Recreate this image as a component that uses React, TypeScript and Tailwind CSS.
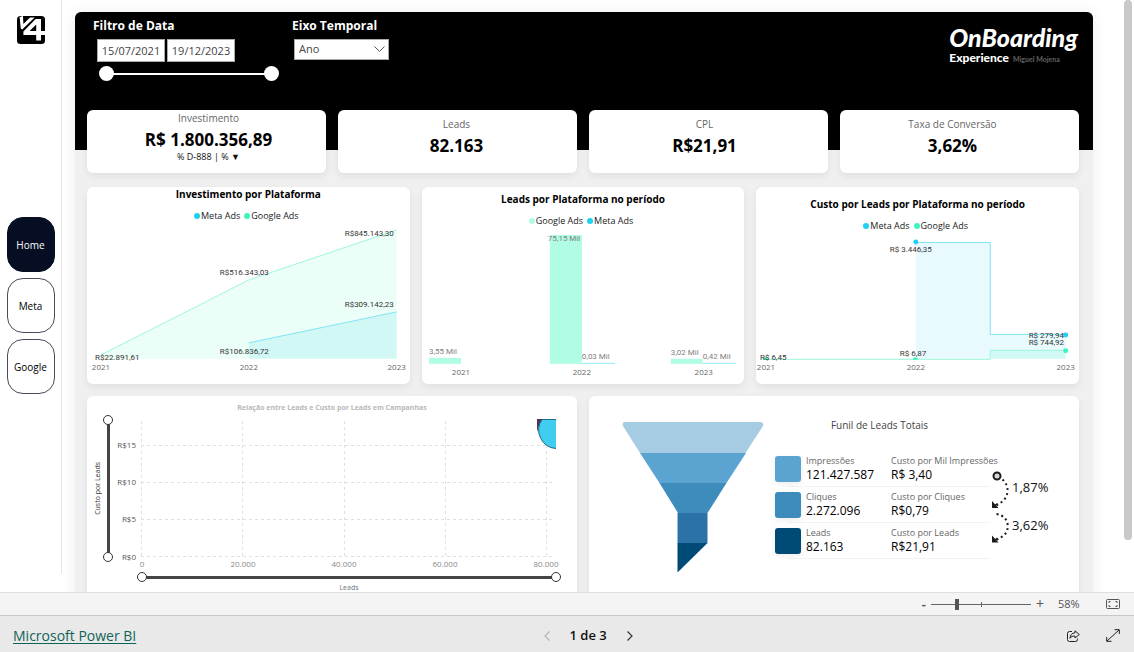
import { useState } from "react";
import clsx from "clsx";

const META = "#1fd1f0";
const GOOGLE = "#3df5bd";

const Logo = () => (
  <svg width="28" height="28" viewBox="0 0 28 28" aria-label="V4">
    <rect width="28" height="28" rx="3.5" fill="#000" />
    <path d="M2.6 1 6 0l.4 8L13 1.6h4.6L5.2 13.4 3.8 12.6Z" fill="#fff" />
    <path
      d="M18.6 3H24v12h4v4h-4v5.6h-4.8V19H6.4v-3.6ZM19.2 8.6 12.6 15h6.6Z"
      fill="#fff"
      fillRule="evenodd"
    />
  </svg>
);

const pages = ["Home", "Meta", "Google"];

const Sidebar = () => {
  const [active, setActive] = useState("Home");

  return (
    <aside className="mb-[18px] flex w-[62px] shrink-0 flex-col items-center border-r border-[#e6e6e6] pt-4">
      <Logo />
      <nav className="mt-[173px] flex flex-col gap-[6px]">
        {pages.map((page) => (
          <button
            key={page}
            onClick={() => setActive(page)}
            className={clsx(
              "h-[55px] w-12 rounded-2xl border pt-[2px] text-[10px]",
              page === active
                ? "border-[#060e24] bg-[#060e24] text-white"
                : "border-[#4a4a58] bg-white text-black",
            )}
          >
            {page}
          </button>
        ))}
      </nav>
    </aside>
  );
};

type RangeProps = { label: string; tone?: "light" | "dark"; vertical?: boolean };

// two native sliders on one track, only the thumbs take the pointer
const DualRange = ({ label, tone = "dark", vertical = false }: RangeProps) => {
  const [from, setFrom] = useState(0);
  const [to, setTo] = useState(100);
  const input = clsx(
    "pointer-events-none absolute inset-0 m-0 h-full w-full appearance-none bg-transparent",
    "[&::-webkit-slider-thumb]:pointer-events-auto [&::-webkit-slider-thumb]:appearance-none [&::-webkit-slider-thumb]:rounded-full [&::-webkit-slider-thumb]:bg-white",
    tone === "light"
      ? "[&::-webkit-slider-thumb]:h-[15px] [&::-webkit-slider-thumb]:w-[15px]"
      : "[&::-webkit-slider-thumb]:h-[10px] [&::-webkit-slider-thumb]:w-[10px] [&::-webkit-slider-thumb]:border [&::-webkit-slider-thumb]:border-solid [&::-webkit-slider-thumb]:border-[#333]",
    vertical && "[direction:rtl] [writing-mode:vertical-lr]",
  );

  return (
    <div
      className={clsx(
        "relative flex items-center justify-center",
        tone === "light" ? "h-[15px]" : vertical ? "h-[147px] w-[10px]" : "h-[10px]",
      )}
    >
      <div
        className={clsx(
          tone === "light" && "mx-2 h-[2px] w-full bg-white",
          tone === "dark" && !vertical && "mx-1 h-[3px] w-full bg-[#444]",
          tone === "dark" && vertical && "h-[138px] w-[3px] bg-[#444]",
        )}
      />
      <input
        type="range"
        aria-label={`${label} mínimo`}
        className={input}
        value={from}
        onChange={(e) => setFrom(Math.min(+e.target.value, to))}
      />
      <input
        type="range"
        aria-label={`${label} máximo`}
        className={input}
        value={to}
        onChange={(e) => setTo(Math.max(+e.target.value, from))}
      />
    </div>
  );
};

const dateInput =
  "h-[23px] w-[68px] border border-[#aaa] bg-white text-center text-[11px] text-[#444]";

const Header = () => (
  <header className="flex h-[138px] rounded-t-md bg-black pt-[6px] pr-[15px] pl-[18px] text-white">
    <fieldset className="w-[199px]">
      <legend className="text-xs leading-4 font-bold">Filtro de Data</legend>
      <div className="mt-[5px] ml-1 flex gap-[2px]">
        <input aria-label="Data inicial" defaultValue="15/07/2021" className={dateInput} />
        <input aria-label="Data final" defaultValue="19/12/2023" className={dateInput} />
      </div>
      <div className="mt-1 ml-[6px] w-[180px]">
        <DualRange label="Data" tone="light" />
      </div>
    </fieldset>

    <div>
      <label htmlFor="eixo" className="block text-xs leading-4 font-bold">
        Eixo Temporal
      </label>
      <div className="relative mt-[5px] ml-[2px]">
        <select
          id="eixo"
          className="block h-[21px] w-[95px] appearance-none border border-[#aaa] bg-white pl-1 text-[11px] text-[#444]"
        >
          <option>Ano</option>
          <option>Trimestre</option>
          <option>Mês</option>
        </select>
        <svg
          className="pointer-events-none absolute top-[7px] right-1"
          width="11"
          height="7"
          viewBox="0 0 11 7"
          fill="none"
          stroke="#555"
        >
          <path d="m.5.5 5 5 5-5" />
        </svg>
      </div>
    </div>

    <div className="ml-auto pt-1 font-['Lato',sans-serif] font-black">
      <div className="text-[25px] leading-[30px] italic">OnBoarding</div>
      <div className="flex items-baseline gap-1 text-xs leading-3">
        Experience
        <span className="text-[7px] text-[#5c5c5c]">Miguel Mojena</span>
      </div>
    </div>
  </header>
);

type Kpi = { label: string; value: string; note?: string; className?: string };

const kpis: Kpi[] = [
  { label: "Investimento", value: "R$ 1.800.356,89", note: "% D-888 | % ▼", className: "pl-1" },
  { label: "Leads", value: "82.163", className: "pt-[6px] pr-[2px]" },
  { label: "CPL", value: "R$21,91", className: "pt-[6px] pr-2" },
  { label: "Taxa de Conversão", value: "3,62%", className: "pt-[6px] pr-[14px]" },
];

const card = "rounded-md bg-white shadow-[0_3px_8px_rgba(0,0,0,0.07)]";

const KpiCard = ({ label, value, note, className }: Kpi) => (
  <div className={clsx(card, "h-[63px] text-center", className)}>
    <div className="text-[10px] leading-4 text-[#666]">{label}</div>
    <div className="mt-[3px] text-[17px] leading-[22px] font-bold text-black">{value}</div>
    {note && <div className="text-[9px] leading-3 text-[#111]">{note}</div>}
  </div>
);

type ChartCardProps = {
  title: string;
  legend: { name: string; color: string }[];
  className?: string;
  children: React.ReactNode;
};

const ChartCard = ({ title, legend, className, children }: ChartCardProps) => (
  <section className={clsx(card, "h-[197px]", className)}>
    <h2 className="text-center text-[10px] leading-[14px] font-bold text-black">{title}</h2>
    <ul className="mt-2 flex justify-center gap-1 pr-1 text-[9px] leading-[14px] text-[#222]">
      {legend.map(({ name, color }) => (
        <li key={name} className="flex items-center gap-px">
          <svg width="6" height="6">
            <circle cx="3" cy="3" r="3" fill={color} />
          </svg>
          {name}
        </li>
      ))}
    </ul>
    {children}
  </section>
);

type Label = [x: number, y: number, text: string];

const Labels = ({ items, className }: { items: Label[]; className: string }) => (
  <g className={clsx("text-[8px]", className)}>
    {items.map(([x, y, text]) => (
      <text key={text} x={x} y={y}>
        {text}
      </text>
    ))}
  </g>
);

const dataLabel = "fill-[#333] font-['Roboto',sans-serif]";
const axisLabel = "fill-[#666] [text-anchor:middle]";

const InvestmentChart = () => (
  <svg viewBox="0 36 323 161" className="block w-full">
    <path d="M14 172V168L162 93 310 43V172Z" fill={GOOGLE} fillOpacity="0.1" />
    <path d="M162 172V156L310 125V172Z" fill={META} fillOpacity="0.12" />
    <path d="M14 168 162 93 310 43" fill="none" stroke="#9cf7da" />
    <path d="M162 156 310 125" fill="none" stroke="#7fe5f5" />
    <Labels
      className={dataLabel}
      items={[
        [258, 49, "R$845.143,30"],
        [133, 88, "R$516.343,03"],
        [258, 120, "R$309.142,23"],
        [133, 167, "R$106.836,72"],
        [8, 173, "R$22.891,61"],
      ]}
    />
    <Labels
      className={axisLabel}
      items={[
        [14, 183, "2021"],
        [162, 183, "2022"],
        [310, 183, "2023"],
      ]}
    />
  </svg>
);

const LeadsChart = () => (
  <svg viewBox="0 41 323 156" className="block w-full">
    <g fill="#b1fce5">
      <rect x="7" y="171" width="32" height="6" />
      <rect x="128" y="48" width="32" height="129" />
      <rect x="249" y="172" width="32" height="5" />
    </g>
    <g fill="#8fe9f7">
      <rect x="160" y="176" width="33" height="1" />
      <rect x="281" y="176" width="33" height="1" />
    </g>
    <Labels
      className="fill-[#808080] font-['Roboto',sans-serif]"
      items={[
        [7, 167, "3,55 Mil"],
        [126, 54, "75,15 Mil"],
        [160, 172, "0,03 Mil"],
        [249, 168, "3,02 Mil"],
        [281, 172, "0,42 Mil"],
      ]}
    />
    <Labels
      className={axisLabel}
      items={[
        [39, 188, "2021"],
        [160, 188, "2022"],
        [282, 188, "2023"],
      ]}
    />
  </svg>
);

const CostChart = () => (
  <svg viewBox="0 46 323 151" className="block w-full">
    <path d="M160 172V55H235V147H310V172Z" fill={META} fillOpacity="0.1" />
    <path d="M235 172V163H310V172Z" fill={GOOGLE} fillOpacity="0.12" />
    <path d="M160 55.5H234.5V147.5H310" fill="none" stroke="#7fe5f5" />
    <path d="M9 172.5H234.5V163.5H310" fill="none" stroke="#9cf7da" />
    <g fill={META}>
      <circle cx="160" cy="55" r="2.5" />
      <circle cx="310" cy="148" r="2.5" />
    </g>
    <path d="M7 173a2.5 2.5 0 0 1 5 0ZM157 173a2.5 2.5 0 0 1 5 0Z" fill={GOOGLE} />
    <circle cx="310" cy="164" r="2.5" fill={GOOGLE} />
    <Labels
      className={dataLabel}
      items={[
        [134, 65, "R$ 3.446,35"],
        [273, 151, "R$ 279,94"],
        [273, 158, "R$ 744,92"],
        [144, 169, "R$ 6,87"],
        [4, 173, "R$ 6,45"],
      ]}
    />
    <Labels
      className={axisLabel}
      items={[
        [10, 183, "2021"],
        [160, 183, "2022"],
        [310, 183, "2023"],
      ]}
    />
  </svg>
);

const ScatterCard = () => (
  <section className={clsx(card, "pt-[5px] pb-4")}>
    <h2 className="text-center text-[7px] leading-[14px] font-bold text-[#b8b8b8]">
      Relação entre Leads e Custo por Leads em Campanhas
    </h2>
    <div className="flex items-start">
      <div className="ml-[6px] flex h-[147px] w-[10px] items-center justify-center">
        <span className="rotate-180 text-[7px] leading-[10px] whitespace-nowrap text-[#333] [writing-mode:vertical-rl]">
          Custo por Leads
        </span>
      </div>
      <DualRange label="Custo por Leads" vertical />
      <svg viewBox="26 19 464 157" className="block min-w-0 flex-1">
        <g stroke="#e0e0e0" strokeDasharray="3 3">
          <path d="M54 49.5H467M54 86.5H467M54 123.5H467M54 160.5H467" />
          <path d="M54.5 25V161M155.5 25V161M257.5 25V161M358.5 25V161M459.5 25V161" />
        </g>
        <path d="M450 36V23H456Q452 28 450 36Z" fill="#4d3558" />
        <path
          d="M469 52.5A18.5 18.5 0 0 1 455 23.5H469"
          fill="#41cdf0"
          stroke="#1d6c85"
        />
        <Labels
          className="fill-[#555] [text-anchor:end]"
          items={[
            [49, 52, "R$15"],
            [49, 89, "R$10"],
            [49, 126, "R$5"],
            [49, 164, "R$0"],
          ]}
        />
        <Labels
          className="fill-[#888] [text-anchor:middle]"
          items={[
            [55, 171, "0"],
            [156, 171, "20.000"],
            [257, 171, "40.000"],
            [358, 171, "60.000"],
            [459, 171, "80.000"],
          ]}
        />
      </svg>
    </div>
    <div className="mr-4 ml-[50px]">
      <DualRange label="Leads" />
      <div className="mt-[2px] text-center text-[7px] leading-2 text-[#687280]">Leads</div>
    </div>
  </section>
);

const stages = [
  { name: "Impressões", total: "121.427.587", costName: "Custo por Mil Impressões", cost: "R$ 3,40", color: "bg-[#5ba3d1]" },
  { name: "Cliques", total: "2.272.096", costName: "Custo por Cliques", cost: "R$0,79", color: "bg-[#3e8cbc]" },
  { name: "Leads", total: "82.163", costName: "Custo por Leads", cost: "R$21,91", color: "bg-[#004a76]" },
];

const Metric = ({ name, value }: { name: string; value: string }) => (
  <div className="leading-[14px] whitespace-nowrap">
    <div className="text-[9px] leading-[14px] text-[#666]">{name}</div>
    <div className="text-xs leading-[14px] text-black">{value}</div>
  </div>
);

const FunnelCard = () => (
  <section className={clsx(card, "flex items-start")}>
    <svg width="142" height="151" viewBox="0 0 142 151" className="mt-[26px] ml-[33px] shrink-0">
      <path d="M2 0H139Q142 1 141 4L123.500 31H18L1 4Q0 1 2 0Z" fill="#a6cce3" />
      <path d="M18 31H124L104.500 61H37.500Z" fill="#5ba3d1" />
      <path d="M37.500 61H104.500L85.500 91H56Z" fill="#3e8cbc" />
      <path d="M55.500 91H85.500V121H55.500Z" fill="#2b73a6" />
      <path d="M55.500 121H85.500L55.500 150.500Z" fill="#004a76" />
    </svg>

    <div className="ml-[11px] w-[215px] pt-[22px]">
      <h2 className="pr-[6px] text-center text-[10px] leading-[14px] text-[#444]">
        Funil de Leads Totais
      </h2>
      <div className="mt-[19px]">
        {stages.map(({ name, total, costName, cost, color }) => (
          <div key={name} className="flex h-9">
            <div
              className={clsx(
                "relative mt-[5px] -mr-[13px] h-[26px] w-[26px] shrink-0 rounded-[3px] shadow-[0_2px_6px_rgba(0,0,0,0.08)]",
                color,
              )}
            />
            <div className="grid w-[202px] grid-cols-[85px_1fr] border-b border-[#f3f3f3] pt-[3px] pl-[18px]">
              <Metric name={name} value={total} />
              <Metric name={costName} value={cost} />
            </div>
          </div>
        ))}
      </div>
    </div>

    <div className="mt-[73px] flex">
      <svg width="22" height="80" viewBox="0 0 22 80" fill="none" stroke="#1c1c1c">
        <circle cx="7" cy="7" r="3.5" fill="#d8d8d8" strokeWidth="2" />
        <g strokeWidth="2" strokeDasharray="2 3">
          <path d="M12.500 10.500C19 16 20 27 11 33.500L4 38" />
          <path d="M6.500 45C20 47 21 63 11.500 68L4 72.500" />
        </g>
        <path d="M2 32 8.500 39H2ZM2 66.500 8.500 73.500H2Z" fill="#1c1c1c" stroke="none" />
        <path d="M3 38 7.500 34.500M3 72.500 7.500 69" strokeWidth="1.500" />
      </svg>
      <div className="flex flex-col gap-[18px] pt-2 text-[13px] leading-5 text-[#111]">
        <span>1,87%</span>
        <span>3,62%</span>
      </div>
    </div>
  </section>
);

const ZoomBar = () => {
  const [zoom, setZoom] = useState(25);

  return (
    <div className="flex h-[23px] shrink-0 items-center justify-end border-t border-[#dedede] bg-[#f4f4f4] pr-[14px] text-[#555]">
      <button className="text-sm leading-4 font-semibold" aria-label="Reduzir">
        -
      </button>
      <div className="relative mx-[5px] flex items-center">
        <input
          type="range"
          aria-label="Zoom"
          value={zoom}
          onChange={(e) => setZoom(+e.target.value)}
          className="h-[11px] w-[100px] appearance-none bg-[linear-gradient(#666,#666)] bg-[length:100%_1px] bg-center bg-no-repeat [&::-webkit-slider-thumb]:h-[11px] [&::-webkit-slider-thumb]:w-1 [&::-webkit-slider-thumb]:appearance-none [&::-webkit-slider-thumb]:bg-[#555]"
        />
        <span className="absolute left-[50px] h-[5px] w-px bg-[#666]" />
      </div>
      <button className="text-sm leading-4" aria-label="Ampliar">
        +
      </button>
      <span className="ml-[14px] w-12 text-[11px]">58%</span>
      <button aria-label="Ajustar à página">
        <svg width="14" height="10" viewBox="0 0 14 10" fill="none" stroke="#555" className="block">
          <rect x=".5" y=".5" width="13" height="9" rx="1" />
          <path d="M3 4V2.500h1.500M3 6v1.500h1.500M11 4V2.500H9.500M11 6v1.500H9.500" />
        </svg>
      </button>
    </div>
  );
};

const Footer = () => (
  <footer className="flex h-[37px] shrink-0 items-center justify-between border-t border-[#c8c8c8] bg-[#e9e9e9] pt-[3px] pr-[14px] pl-[13px]">
    <a href="#" className="text-sm text-[#106358] underline underline-offset-2">
      Microsoft Power BI
    </a>
    <div className="flex items-center gap-5 text-[13px] font-semibold text-[#111]">
      <button aria-label="Página anterior" disabled>
        <svg width="6" height="10" viewBox="0 0 6 10" fill="none" stroke="#b5b5b5" strokeWidth="1.200">
          <path d="M5.500.5 1 5l4.500 4.500" />
        </svg>
      </button>
      1 de 3
      <button aria-label="Próxima página">
        <svg width="6" height="10" viewBox="0 0 6 10" fill="none" stroke="#333" strokeWidth="1.200">
          <path d="M.5.5 5 5 .5 9.500" />
        </svg>
      </button>
    </div>
    <div className="flex w-20 items-center justify-end gap-[26px]">
      <button aria-label="Compartilhar">
        <svg width="13" height="12" viewBox="0 0 13 12" fill="none" stroke="#222" className="block">
          <path d="M5 1.500H2.500a2 2 0 0 0-2 2v6a2 2 0 0 0 2 2h6a2 2 0 0 0 2-2V8.500" />
          <path d="M8 .8 12.300 4.500 8 8V6C5.500 6 4 6.700 3 8.300 3.200 5 5 3 8 2.800Z" strokeLinejoin="round" />
        </svg>
      </button>
      <button aria-label="Tela inteira">
        <svg width="14" height="13" viewBox="0 0 14 13" fill="none" stroke="#222" className="block">
          <path d="M1 12 13 1M8.500.7H13.300V5M.7 8V12.300H5.500" />
        </svg>
      </button>
    </div>
  </footer>
);

const App = () => (
  <div className="flex h-screen flex-col overflow-hidden bg-white font-['Open_Sans','Noto_Sans',sans-serif]">
    <div className="flex min-h-0 flex-1 overflow-hidden">
      <Sidebar />
      <main className="min-w-0 flex-1 pt-3 pl-[13px]">
        <div className="min-h-full rounded-t-md bg-[#f0f0f0] shadow-[0_0_16px_rgba(0,0,0,0.07)]">
          <Header />
          <div className="relative -mt-10 flex flex-col pr-[14px] pl-3">
            <div className="grid grid-cols-4 gap-3">
              {kpis.map((kpi) => (
                <KpiCard key={kpi.label} {...kpi} />
              ))}
            </div>
            <div className="mt-[14px] grid grid-cols-3 gap-3">
              <ChartCard
                title="Investimento por Plataforma"
                legend={[
                  { name: "Meta Ads", color: META },
                  { name: "Google Ads", color: GOOGLE },
                ]}
              >
                <InvestmentChart />
              </ChartCard>
              <ChartCard
                title="Leads por Plataforma no período"
                className="pt-[5px]"
                legend={[
                  { name: "Google Ads", color: "#b1fce5" },
                  { name: "Meta Ads", color: META },
                ]}
              >
                <LeadsChart />
              </ChartCard>
              <ChartCard
                title="Custo por Leads por Plataforma no período"
                className="pt-[10px]"
                legend={[
                  { name: "Meta Ads", color: META },
                  { name: "Google Ads", color: GOOGLE },
                ]}
              >
                <CostChart />
              </ChartCard>
            </div>
            <div className="mt-3 grid grid-cols-2 gap-3">
              <ScatterCard />
              <FunnelCard />
            </div>
          </div>
        </div>
      </main>
      <div className="ml-[31px] w-[10px] shrink-0 pr-[2px]">
        <div className="h-[540px] w-2 rounded-full bg-[#c8c8c8]" />
      </div>
    </div>
    <ZoomBar />
    <Footer />
  </div>
);

export default App;
